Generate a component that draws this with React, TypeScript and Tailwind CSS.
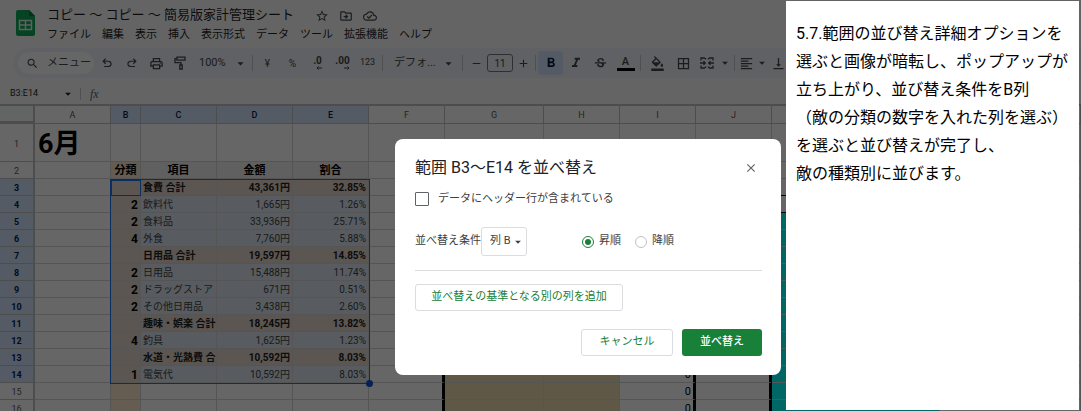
import React from 'react';
import {
    MdAdd,
    MdArrowDropDown,
    MdBorderAll,
    MdClose,
    MdFormatAlignLeft,
    MdFormatBold,
    MdFormatColorFill,
    MdFormatItalic,
    MdOutlineCloudDone,
    MdOutlineDriveFileMove,
    MdOutlinePrint,
    MdRemove,
    MdSearch,
    MdStarBorder,
    MdStrikethroughS,
    MdVerticalAlignBottom,
} from 'react-icons/md';

const MENUS = ['ファイル', '編集', '表示', '挿入', '表示形式', 'データ', 'ツール', '拡張機能', 'ヘルプ'];

const COLUMNS = [
    { name: 'A', width: 'w-[76px]' },
    { name: 'B', width: 'w-[30px]', active: true },
    { name: 'C', width: 'w-[76px]', active: true },
    { name: 'D', width: 'w-[76px]', active: true },
    { name: 'E', width: 'w-[76px]', active: true },
    { name: 'F', width: 'w-[76px]' },
    { name: 'G', width: 'w-[99px]' },
    { name: 'H', width: 'w-[76px]' },
    { name: 'I', width: 'w-[76px]' },
    { name: 'J', width: 'w-[76px]' },
    { name: '', width: 'w-[168px]' },
    { name: '', width: 'w-[141px]' },
];

interface Entry {
    kind: string;
    item: string;
    amount: string;
    ratio: string;
    total?: boolean;
}

const ENTRIES: Entry[] = [
    { kind: '', item: '食費 合計', amount: '43,361円', ratio: '32.85%', total: true },
    { kind: '2', item: '飲料代', amount: '1,665円', ratio: '1.26%' },
    { kind: '2', item: '食料品', amount: '33,936円', ratio: '25.71%' },
    { kind: '4', item: '外食', amount: '7,760円', ratio: '5.88%' },
    { kind: '', item: '日用品 合計', amount: '19,597円', ratio: '14.85%', total: true },
    { kind: '2', item: '日用品', amount: '15,488円', ratio: '11.74%' },
    { kind: '2', item: 'ドラッグストア', amount: '671円', ratio: '0.51%' },
    { kind: '2', item: 'その他日用品', amount: '3,438円', ratio: '2.60%' },
    { kind: '', item: '趣味・娯楽 合計', amount: '18,245円', ratio: '13.82%', total: true },
    { kind: '4', item: '釣具', amount: '1,625円', ratio: '1.23%' },
    { kind: '', item: '水道・光熱費 合', amount: '10,592円', ratio: '8.03%', total: true },
    { kind: '1', item: '電気代', amount: '10,592円', ratio: '8.03%' },
];

const NOTE = [
    '5.7.範囲の並び替え詳細オプションを',
    '選ぶと画像が暗転し、ポップアップが',
    '立ち上がり、並び替え条件をB列',
    '（敵の分類の数字を入れた列を選ぶ）',
    'を選ぶと並び替えが完了し、',
    '敵の種類別に並びます。',
];

function SheetsLogo() {
    return (
        <svg width="19" height="26" viewBox="0 0 19 26" aria-hidden="true">
            <path d="M2 0h11l6 6v18a2 2 0 0 1-2 2H2a2 2 0 0 1-2-2V2a2 2 0 0 1 2-2z" fill="#0fa958" />
            <path d="M13 0l6 6h-6z" fill="#0b7a40" />
            <path d="M3.5 10.5h12v9h-12zM3.5 15h12M9.5 10.5v9" fill="none" stroke="#e6f4ea" strokeWidth="1.5" />
        </svg>
    );
}

function Symbol({ d, size = 14 }: { d: string; size?: number }) {
    return (
        <svg width={size} height={size} viewBox="0 -960 960 960" fill="currentColor" aria-hidden="true">
            <path d={d} />
        </svg>
    );
}

const UNDO =
    'M280-200v-80h284q63 0 109.5-40T720-420q0-60-46.5-100T564-560H312l104 104-56 56-200-200 200-200 56 56-104 104h252q97 0 167 63t70 157q0 94-70 157t-167 63H280Z';
const REDO =
    'M396-200q-97 0-167-63t-70-157q0-94 70-157t167-63h252L544-744l56-56 200 200-200 200-56-56 104-104H396q-63 0-109.5 40T240-420q0 60 46.5 100T396-280h284v80H396Z';

function RollerIcon() {
    return (
        <svg width="12" height="14" viewBox="0 0 12 14" fill="none" stroke="currentColor" strokeWidth="1.3" aria-hidden="true">
            <path d="M3 1.2h8v3H3zM3 2.7H1v4h6v2.3M5.8 9h2.4v4H5.8z" />
        </svg>
    );
}

function MergeIcon() {
    return (
        <svg width="14" height="12" viewBox="0 0 14 12" fill="none" stroke="currentColor" strokeWidth="1.3" aria-hidden="true">
            <path d="M5 1H1v2.5M9 1h4v2.5M5 11H1V8.500M9 11h4V8.500M0 6h5M14 6H9M3.500 4.200L5.300 6 3.500 7.800M10.500 4.200L8.700 6l1.800 1.800M5.500 1v1.500M8.500 1v1.500M5.500 11V9.500M8.500 11V9.500" />
        </svg>
    );
}

function DecimalIcon({ digits, arrow }: { digits: string; arrow: 'left' | 'right' }) {
    return (
        <span className="flex flex-col items-end text-[10px] leading-[10px] font-bold">
            {digits}
            <svg width="6" height="4" viewBox="0 0 6 4" fill="none" stroke="currentColor" aria-hidden="true">
                <path d={arrow === 'left' ? 'M6 2H1M2.500 0.500L1 2l1.500 1.500' : 'M0 2h5M3.500 0.500L5 2 3.500 3.500'} />
            </svg>
        </span>
    );
}

interface ToolProps {
    label: string;
    width?: string;
    className?: string;
    children: React.ReactNode;
}

function Tool({ label, width = 'w-[25px]', className = '', children }: ToolProps) {
    return (
        <button type="button" aria-label={label} className={`flex h-6 shrink-0 items-center justify-center ${width} ${className}`}>
            {children}
        </button>
    );
}

function Divider() {
    return <span className="mx-[2px] h-4 w-px shrink-0 bg-[#c7c7c7]" />;
}

function Toolbar() {
    return (
        <div className="ml-[13px] flex h-[30px] items-center overflow-hidden rounded-l-full bg-[#edf2fa] pl-[5px] text-[#444746]">
            <button type="button" className="flex h-[22px] w-[76px] shrink-0 items-center gap-2 rounded-full bg-white pl-2 text-[11px]">
                <MdSearch size={13} />
                メニュー
            </button>
            <Tool label="元に戻す"><Symbol d={UNDO} /></Tool>
            <Tool label="やり直し"><Symbol d={REDO} /></Tool>
            <Tool label="印刷" width="w-6"><MdOutlinePrint size={15} /></Tool>
            <Tool label="書式を貼り付け" width="w-6"><RollerIcon /></Tool>
            <button type="button" className="flex h-6 w-[58px] shrink-0 items-center justify-between pr-[2px] pl-[7px] text-[11px]">
                100%
                <MdArrowDropDown size={15} />
            </button>
            <Divider />
            <Tool label="通貨" className="text-[10px]">¥</Tool>
            <Tool label="パーセント" className="text-[10px]">%</Tool>
            <Tool label="小数点以下を減らす"><DecimalIcon digits=".0" arrow="left" /></Tool>
            <Tool label="小数点以下を増やす"><DecimalIcon digits=".00" arrow="right" /></Tool>
            <Tool label="表示形式" className="text-[9px]">123</Tool>
            <Divider />
            <button type="button" className="flex h-6 w-[75px] shrink-0 items-center justify-between pr-1 pl-[9px] text-[11px]">
                デフォ...
                <MdArrowDropDown size={15} />
            </button>
            <Divider />
            <Tool label="小さく" width="w-[22px]"><MdRemove size={13} /></Tool>
            <input
                aria-label="フォントサイズ"
                defaultValue="11"
                className="h-[18px] w-[26px] shrink-0 rounded-[3px] border border-[#747775] text-center text-[10px]"
            />
            <Tool label="大きく" width="w-[20px]"><MdAdd size={13} /></Tool>
            <Divider />
            <Tool label="太字" className="rounded-sm bg-[#d3e3fd] text-[#041e49]"><MdFormatBold size={16} /></Tool>
            <Tool label="斜体"><MdFormatItalic size={16} /></Tool>
            <Tool label="取り消し線"><MdStrikethroughS size={15} /></Tool>
            <Tool label="文字色">
                <span className="w-[18px] border-b-3 border-black text-center text-[11px] leading-[13px] font-medium">A</span>
            </Tool>
            <Divider />
            <Tool label="塗りつぶし" width="w-7"><MdFormatColorFill size={15} /></Tool>
            <Tool label="枠線"><MdBorderAll size={15} /></Tool>
            <Tool label="結合" width="w-[22px]"><MergeIcon /></Tool>
            <MdArrowDropDown size={14} className="shrink-0" />
            <Divider />
            <Tool label="水平方向の配置" width="w-[18px]"><MdFormatAlignLeft size={15} /></Tool>
            <MdArrowDropDown size={14} className="shrink-0" />
            <Tool label="垂直方向の配置" width="w-[18px]"><MdVerticalAlignBottom size={15} /></Tool>
        </div>
    );
}

function Header() {
    return (
        <header className="bg-[#f9fbfd]">
            <div className="flex h-12 items-start">
                <a href="#home" aria-label="ホーム" className="mt-[10px] ml-4">
                    <SheetsLogo />
                </a>
                <div className="ml-3 whitespace-nowrap">
                    <div className="flex h-[25px] items-end text-[#1f1f1f]">
                        <h1 className="w-[268px] text-[13px] leading-5">コピー ～ コピー ～ 簡易版家計管理シート</h1>
                        <div className="flex gap-[10px] pb-[2px] text-[#444746]">
                            <button type="button" aria-label="スター"><MdStarBorder size={14} /></button>
                            <button type="button" aria-label="移動"><MdOutlineDriveFileMove size={14} /></button>
                            <button type="button" aria-label="保存状態"><MdOutlineCloudDone size={14} /></button>
                        </div>
                    </div>
                    <nav className="flex gap-[11px] text-[11px] leading-5 text-[#1f1f1f]">
                        {MENUS.map((menu) => (
                            <button type="button" key={menu}>{menu}</button>
                        ))}
                    </nav>
                </div>
            </div>
            <Toolbar />
            <div className="flex h-7 items-center border-b-2 border-[#c0c0c0] bg-[#f9fbfd] pt-[6px] text-[9px] text-[#1f1f1f]">
                <span className="w-[61px] pl-[10px]">B3:E14</span>
                <MdArrowDropDown size={14} />
                <span className="mx-[5px] h-3 w-px bg-[#c7c7c7]" />
                <span className="pl-1 font-['Liberation_Serif'] text-[12px] text-[#5f6368] italic">fx</span>
            </div>
        </header>
    );
}

const CELL = 'border-r border-b border-[#d5d5d5] overflow-hidden whitespace-nowrap px-0 pt-[2px] pb-0';

function RightCells({ row }: { row: number }) {
    const filled = row >= 5;
    const block = row >= 4 ? 'border-r-3 border-r-black' : '';
    const tan = row >= 4 ? 'bg-[#efdcb0]' : '';
    return (
        <>
            <td className={`${CELL} ${block}`} />
            <td className={`${CELL} ${tan}`} />
            <td className={`${CELL} ${tan}`} />
            <td className={`${CELL} ${block} pr-[2px] text-right text-[11px]`}>{filled ? '0' : ''}</td>
            <td className={`${CELL} ${block}`} />
            <td className={`${CELL} ${filled ? 'bg-[#00ffff]' : ''} ${row === 3 || row === 4 ? 'border-b-black' : ''}`} />
            <td className={CELL} />
        </>
    );
}

function RowHead({ row, active = false }: { row: number; active?: boolean }) {
    return (
        <th
            scope="row"
            className={`border-r-2 border-b border-[#c0c0c0] px-0 pt-[2px] pb-0 text-[9px] ${active ? 'bg-[#d3e3fd] font-bold text-[#041e49]' : 'bg-white font-normal text-[#575a5a]'}`}
        >
            {row}
        </th>
    );
}

function Sheet() {
    return (
        <div className="relative">
            <table className="w-full min-w-[1081px] table-fixed border-separate border-spacing-0 bg-white text-[11px] leading-[14px] text-black">
                <thead>
                    <tr className="h-[18px]">
                        <th className="w-[35px] border-r-2 border-b-3 border-[#c0c0c0] bg-[#f8f9fa] p-0" />
                        {COLUMNS.map(({ name, width, active }, i) => (
                            <th
                                key={i}
                                scope="col"
                                className={`${width} border-r border-b border-[#c0c0c0] p-0 text-[9px] ${active ? 'bg-[#d3e3fd] font-medium text-[#041e49]' : 'font-normal text-[#575a5a]'}`}
                            >
                                {name}
                            </th>
                        ))}
                    </tr>
                </thead>
                <tbody>
                    <tr className="h-[38px]">
                        <RowHead row={1} />
                        <td className={`${CELL} pl-[3px] text-[27px] leading-8 font-bold`}>6月</td>
                        <td className={CELL} />
                        <td className={CELL} />
                        <td className={CELL} />
                        <td className={CELL} />
                        <RightCells row={1} />
                    </tr>
                    <tr className="h-[17px] text-center font-bold">
                        <RowHead row={2} />
                        <td className={CELL} />
                        <td className={`${CELL} bg-[#fce5cd]`}>分類</td>
                        <td className={`${CELL} bg-[#efefef]`}>項目</td>
                        <td className={`${CELL} bg-[#efefef]`}>金額</td>
                        <td className={`${CELL} bg-[#efefef]`}>割合</td>
                        <RightCells row={2} />
                    </tr>
                    {ENTRIES.map((entry, i) => {
                        const fill = entry.total ? 'bg-[#e3d6cd] font-bold text-[#222222]' : 'bg-[#dce6ef] text-[#434343]';
                        return (
                            <tr key={i} className="h-[17px] text-[10px]">
                                <RowHead row={i + 3} active />
                                <td className={CELL} />
                                <td className={`${CELL} bg-[#e3d6cd] pr-[2px] text-right text-[12px] font-bold`}>{entry.kind}</td>
                                <td className={`${CELL} ${fill} pl-[2px]`}>{entry.item}</td>
                                <td className={`${CELL} ${fill} pr-[2px] text-right`}>{entry.amount}</td>
                                <td className={`${CELL} ${fill} pr-[2px] text-right`}>{entry.ratio}</td>
                                <RightCells row={i + 3} />
                            </tr>
                        );
                    })}
                    {[15, 16].map((row) => (
                        <tr key={row} className="h-[17px]">
                            <RowHead row={row} />
                            <td className={CELL} />
                            <td className={`${CELL} bg-[#fce5cd]`} />
                            <td className={CELL} />
                            <td className={CELL} />
                            <td className={CELL} />
                            <RightCells row={row} />
                        </tr>
                    ))}
                </tbody>
            </table>
            {/* selected range, with its active cell and fill handle */}
            <div className="absolute top-[73px] left-[110px] h-[205px] w-[260px] border border-[#1a73e8]">
                <div className="h-4 w-[30px] border border-[#1a73e8]" />
                <span className="absolute -right-1 -bottom-1 size-[7px] rounded-full bg-[#0b57d0]" />
            </div>
        </div>
    );
}

function SortDialog() {
    return (
        <div
            role="dialog"
            aria-labelledby="sort-title"
            className="absolute top-[139px] left-[395px] w-[386px] rounded-lg bg-white pt-[17px] pr-[19px] pb-[19px] pl-5 text-[11px] text-[#3c4043]"
        >
            <div className="flex items-center justify-between">
                <h2 id="sort-title" className="text-[16px] leading-6 text-[#202124]">範囲 B3～E14 を並べ替え</h2>
                <button type="button" aria-label="閉じる" className="mr-1 text-[#5f6368]">
                    <MdClose size={14} />
                </button>
            </div>
            <label className="mt-[9px] flex h-5 items-center gap-[9px]">
                <input type="checkbox" className="size-[14px] appearance-none rounded-[1px] border border-[#5f6368]" />
                データにヘッダー行が含まれている
            </label>
            <div className="mt-[18px] flex items-center">
                <label htmlFor="sort-column">並べ替え条件</label>
                <div className="relative">
                    <select
                        id="sort-column"
                        className="h-[29px] w-[46px] appearance-none rounded-[3px] border border-[#dadce0] bg-white pl-2 text-[11px]"
                    >
                        <option>列 B</option>
                    </select>
                    <MdArrowDropDown size={14} className="pointer-events-none absolute top-2 right-[2px]" />
                </div>
                <label className="ml-[55px] flex items-center gap-[5px]">
                    <input
                        type="radio"
                        name="order"
                        defaultChecked
                        className="size-3 appearance-none rounded-full border border-[#188038] bg-[#188038] bg-clip-content p-[2px]"
                    />
                    昇順
                </label>
                <label className="ml-[14px] flex items-center gap-[5px]">
                    <input type="radio" name="order" className="size-3 appearance-none rounded-full border border-[#bdc1c6]" />
                    降順
                </label>
            </div>
            <hr className="mt-[14px] border-[#dadce0]" />
            <button
                type="button"
                className="mt-[13px] flex h-[27px] w-[208px] items-center justify-center rounded-[3px] border border-[#dadce0] text-[#188038]"
            >
                並べ替えの基準となる別の列を追加
            </button>
            <div className="mt-[18px] flex justify-end gap-[9px]">
                <button type="button" className="h-[27px] w-[92px] rounded-[3px] border border-[#dadce0] text-[#188038]">
                    キャンセル
                </button>
                <button type="button" className="h-[27px] w-20 rounded-[3px] bg-[#188038] font-medium text-white">
                    並べ替え
                </button>
            </div>
        </div>
    );
}

export default function App() {
    return (
        <div className="relative h-screen overflow-hidden bg-white font-[Roboto,'Noto_Sans_CJK_JP',sans-serif]">
            <Header />
            <Sheet />
            <div className="absolute inset-0 bg-black/60" />
            <SortDialog />
            <aside className="absolute top-px right-[2px] bottom-px w-[293px] bg-white px-[10px] pt-[19px] text-[16px] leading-7 whitespace-nowrap text-black">
                {NOTE.map((line) => (
                    <p key={line}>{line}</p>
                ))}
            </aside>
        </div>
    );
}
